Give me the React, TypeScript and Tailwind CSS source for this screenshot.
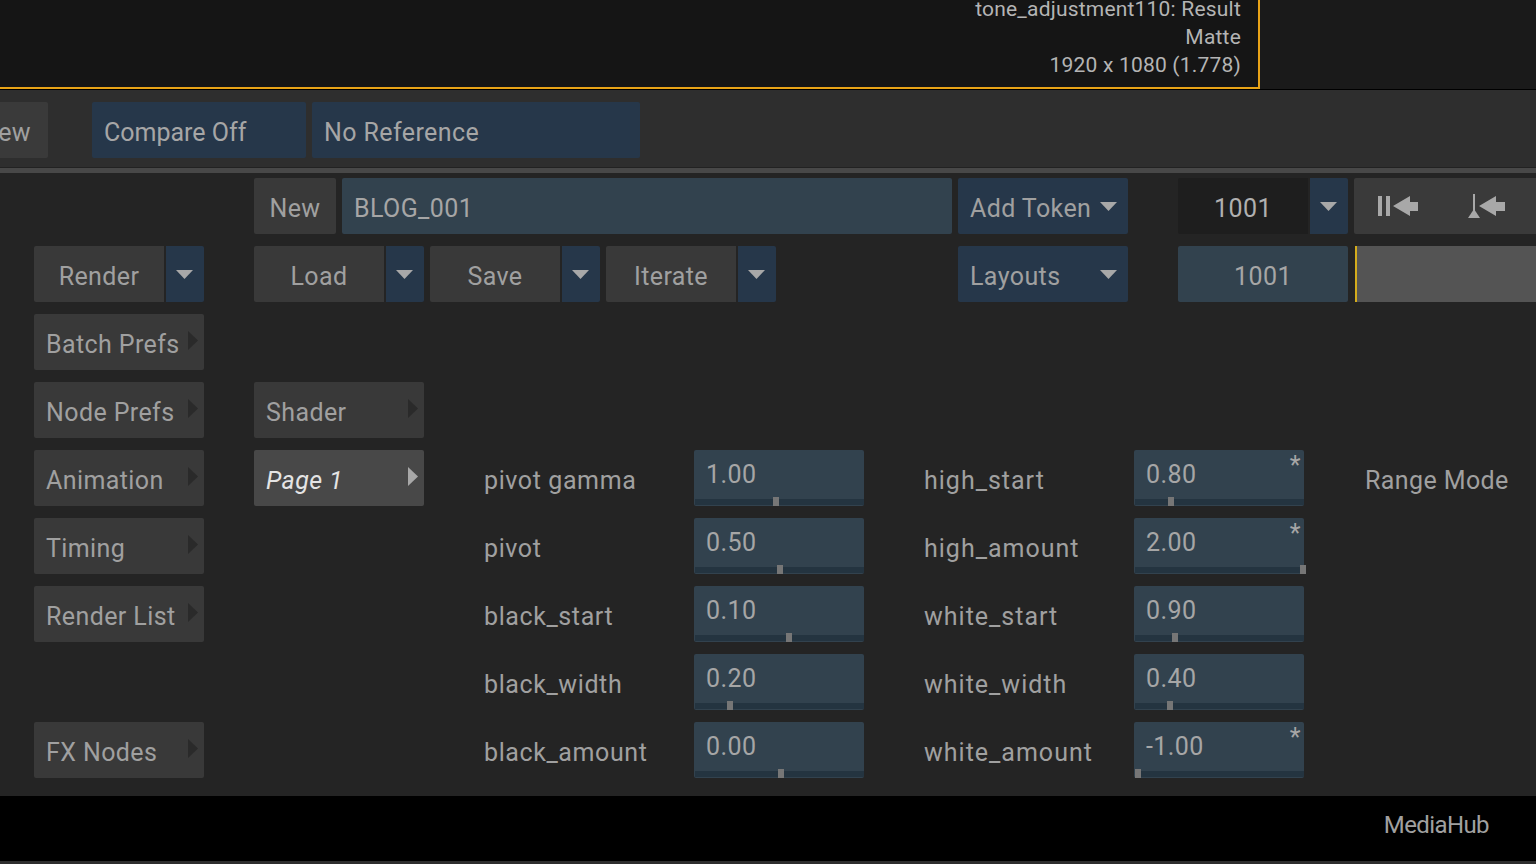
const font = "font-['Roboto','Liberation_Sans',sans-serif]";

function Down() {
  return (
    <svg width="17" height="9" viewBox="0 0 17 9">
      <polygon points="0,0 17,0 8.5,9" fill="#a8a8a8" />
    </svg>
  );
}

function Btn({ w, label, cls = "" }: { w: number; label: string; cls?: string }) {
  return (
    <div style={{ width: w }} className={`h-14 shrink-0 rounded-[2px] bg-[#393939] flex items-center justify-center pt-[6px] text-[#a0a0a0] ${cls}`}>
      {label}
    </div>
  );
}

function Split({ w, label }: { w: number; label: string }) {
  return (
    <div className="flex gap-[2px] shrink-0">
      <Btn w={w} label={label} cls="rounded-r-none" />
      <div className="w-[38px] h-14 rounded-r-[2px] bg-[#26374a] flex items-center justify-center pr-[2px]">
        <Down />
      </div>
    </div>
  );
}

function Menu({ label, active }: { label?: string; active?: boolean }) {
  if (!label) return <div className="w-[170px] h-14 shrink-0" />;
  return (
    <div className={`w-[170px] h-14 shrink-0 rounded-[2px] flex items-center justify-between pl-3 pr-[6px] ${active ? "bg-[#484848] text-[#e4e4e4] italic" : "bg-[#393939] text-[#a0a0a0]"}`}>
      <span className="pt-[6px]">{label}</span>
      <svg width="10" height="19" viewBox="0 0 10 19" className="-mt-1">
        <polygon points="0,0 10,9.5 0,19" fill={active ? "#a8a8a8" : "#2a2a2a"} />
      </svg>
    </div>
  );
}

function Field({ value, pos, star }: { value: string; pos: number; star?: boolean }) {
  return (
    <div className="relative w-[170px] h-14 shrink-0 rounded-[2px] bg-[#32424e] text-[#a6a6a6]">
      <div className="pl-3 pt-2 leading-[34px]">{value}</div>
      {star && <div className="absolute right-[3px] top-px leading-[30px]">*</div>}
      <div className="absolute left-px right-0 bottom-px h-[6px] bg-[#243440]" />
      <div style={{ left: pos }} className="absolute bottom-0 w-[6px] h-[9px] bg-[#767676]" />
    </div>
  );
}

function Param({ label, value, pos, star, wide }: { label: string; value: string; pos: number; star?: boolean; wide?: boolean }) {
  return (
    <div className="flex">
      <div className={`w-[210px] h-14 shrink-0 flex items-center pt-[6px] text-[#a0a0a0] ${wide ? "tracking-[1px]" : "tracking-[0.6px]"}`}>{label}</div>
      <Field value={value} pos={pos} star={star} />
    </div>
  );
}

const rows = [
  { left: "Batch Prefs" },
  { left: "Node Prefs", mid: "Shader" },
  { left: "Animation", mid: "Page 1", active: true,
    a: { label: "pivot gamma", value: "1.00", pos: 79 },
    b: { label: "high_start", value: "0.80", pos: 34, star: true }, extra: "Range Mode" },
  { left: "Timing",
    a: { label: "pivot", value: "0.50", pos: 83 },
    b: { label: "high_amount", value: "2.00", pos: 166, star: true } },
  { left: "Render List",
    a: { label: "black_start", value: "0.10", pos: 92 },
    b: { label: "white_start", value: "0.90", pos: 38 } },
  {
    a: { label: "black_width", value: "0.20", pos: 33 },
    b: { label: "white_width", value: "0.40", pos: 33 } },
  { left: "FX Nodes",
    a: { label: "black_amount", value: "0.00", pos: 84 },
    b: { label: "white_amount", value: "-1.00", pos: 1, star: true } },
];

export default function App() {
  return (
    <div className={`w-[1536px] h-[864px] overflow-hidden flex flex-col bg-[#242424] text-[25px] tracking-[0.4px] ${font}`}>
      <div className="h-[90px] shrink-0 flex bg-[#1a1a1a] border-b border-black">
        <div className="w-[1260px] h-full bg-[#151515] border-b-2 border-r-2 border-[#e8a317] overflow-hidden flex flex-col items-end justify-end pr-[17px] pb-2 leading-[28px] text-[21px] tracking-[0.2px] text-[#b4b4b4]">
          <div>tone_adjustment110: Result</div>
          <div>Matte</div>
          <div>1920 x 1080 (1.778)</div>
        </div>
      </div>

      <div className="h-[77px] shrink-0 bg-[#2e2e2e] flex pt-3 gap-[6px]">
        <div className="-ml-[30px] w-[78px] h-14 rounded-[2px] bg-[#3a3a3a] flex items-center justify-end pr-[17px] pt-[6px] text-[#a0a0a0]">View</div>
        <div className="ml-[38px] w-[214px] h-14 rounded-[2px] bg-[#26374a] flex items-center pl-3 pt-[6px] tracking-normal text-[#a6a6a6]">Compare Off</div>
        <div className="w-[328px] h-14 rounded-[2px] bg-[#26374a] flex items-center pl-3 pt-[6px] text-[#a6a6a6]">No Reference</div>
      </div>
      <div className="h-[6px] shrink-0 bg-[#484848] border-t border-[#222222]" />

      <div className="flex-1 flex flex-col gap-3 pt-[5px] pl-[34px] overflow-hidden">
        <div className="flex">
          <div className="w-[220px] shrink-0" />
          <Btn w={82} label="New" />
          <div className="ml-[6px] w-[610px] h-14 shrink-0 rounded-[2px] bg-[#32424e] flex items-center pl-3 pt-[6px] text-[#a6a6a6]">BLOG_001</div>
          <div className="ml-[6px] w-[170px] h-14 shrink-0 rounded-[2px] bg-[#26374a] flex items-center justify-between pl-3 pr-[11px] text-[#a0a0a0]">
            <span className="pt-[6px]">Add Token</span>
            <Down />
          </div>
          <div className="ml-[50px] w-[130px] h-14 shrink-0 rounded-l-[2px] bg-[#1e1e1e] flex items-center justify-center pt-[6px] text-[#b0b0b0]">1001</div>
          <div className="ml-[2px] w-[38px] h-14 shrink-0 rounded-r-[2px] bg-[#26374a] flex items-center justify-center pr-[2px]">
            <Down />
          </div>
          <div className="ml-[6px] w-[200px] h-14 shrink-0 rounded-[2px] bg-[#3a3a3a] flex items-center pl-[24px]">
            <svg width="130" height="24" viewBox="0 0 130 24" fill="#a8a8a8">
              <rect x="0" y="2" width="4" height="20" />
              <rect x="8" y="2" width="4" height="20" />
              <polygon points="15,12 32,2 32,8 40,8 40,17 32,17 32,22" />
              <rect x="95" y="0" width="2" height="20" />
              <polygon points="96,15 102,24 90,24" />
              <polygon points="101,12 118,2 118,8 127,8 127,17 118,17 118,22" />
            </svg>
          </div>
        </div>

        <div className="flex">
          <Split w={130} label="Render" />
          <div className="ml-[50px] flex gap-[6px]">
            <Split w={130} label="Load" />
            <Split w={130} label="Save" />
            <Split w={130} label="Iterate" />
          </div>
          <div className="ml-[182px] w-[170px] h-14 shrink-0 rounded-[2px] bg-[#26374a] flex items-center justify-between pl-3 pr-[11px] text-[#a0a0a0]">
            <span className="pt-[6px]">Layouts</span>
            <Down />
          </div>
          <div className="ml-[50px] w-[170px] h-14 shrink-0 rounded-[2px] bg-[#32424e] flex items-center justify-center pt-[6px] text-[#a6a6a6]">1001</div>
          <div className="ml-[7px] w-[200px] h-14 shrink-0 bg-[#545454] border-l-2 border-[#d4ac1c]" />
        </div>

        {rows.map((r, i) => (
          <div key={i} className="flex h-14">
            <Menu label={r.left} />
            <div className="ml-[50px]">
              <Menu label={r.mid} active={r.active} />
            </div>
            {r.a && r.b && (
              <div className="ml-[60px] flex gap-[60px]">
                <Param {...r.a} />
                <Param {...r.b} wide />
              </div>
            )}
            {r.extra && (
              <div className="ml-[61px] h-14 flex items-center pt-[6px] whitespace-nowrap text-[#a0a0a0]">{r.extra}</div>
            )}
          </div>
        ))}
      </div>

      <div className="h-[68px] shrink-0 bg-black border-b-[3px] border-[#2e2e2e] flex justify-end pr-[47px] pt-[11px] text-[24px] leading-[36px] tracking-[-0.6px] text-[#a0a0a0]">
        MediaHub
      </div>
    </div>
  );
}
